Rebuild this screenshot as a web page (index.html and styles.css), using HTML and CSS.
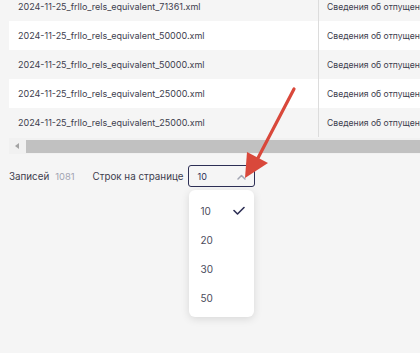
FILE: index.html
```html
<!DOCTYPE html>
<html lang="ru">
<head>
  <meta charset="UTF-8" />
  <meta name="viewport" content="width=device-width, initial-scale=1.0" />
  <title>Файлы</title>
  <link rel="stylesheet" href="styles.css">
</head>
<body>
  <!-- Таблица файлов -->
  <div class="table">
    <div class="row">
      <div class="cell name">2024-11-25_frllo_rels_equivalent_71361.xml</div>
      <div class="cell type">Сведения об отпущенных лекарственных препаратах</div>
    </div>
    <div class="row">
      <div class="cell name">2024-11-25_frllo_rels_equivalent_50000.xml</div>
      <div class="cell type">Сведения об отпущенных лекарственных препаратах</div>
    </div>
    <div class="row">
      <div class="cell name">2024-11-25_frllo_rels_equivalent_50000.xml</div>
      <div class="cell type">Сведения об отпущенных лекарственных препаратах</div>
    </div>
    <div class="row">
      <div class="cell name">2024-11-25_frllo_rels_equivalent_25000.xml</div>
      <div class="cell type">Сведения об отпущенных лекарственных препаратах</div>
    </div>
    <div class="row">
      <div class="cell name">2024-11-25_frllo_rels_equivalent_25000.xml</div>
      <div class="cell type">Сведения об отпущенных лекарственных препаратах</div>
    </div>
  </div>

  <div class="scrollbar">
    <div class="scroll-btn"></div>
    <div class="scroll-thumb"></div>
  </div>

  <!-- Пагинация -->
  <div class="footer">
    <span class="label">Записей</span>
    <span class="count">1081</span>
    <span class="label rows-label">Строк на странице</span>
    <div class="select">
      <div class="select-box">
        <span>10</span>
        <svg class="chevron" width="9" height="6" viewBox="0 0 9 6">
          <path d="M1 5 L4.5 1.5 L8 5" fill="none" stroke="#a3a6b4" stroke-width="1.5" stroke-linecap="round" stroke-linejoin="round"/>
        </svg>
      </div>
      <ul class="dropdown">
        <li class="selected">10
          <svg class="check" width="12" height="9" viewBox="0 0 12 9">
            <path d="M1 4.5 L4.5 8 L11 1.5" fill="none" stroke="#2d2f55" stroke-width="1.6" stroke-linecap="round" stroke-linejoin="round"/>
          </svg>
        </li>
        <li>20</li>
        <li>30</li>
        <li>50</li>
      </ul>
    </div>
  </div>

  <svg class="pointer" width="420" height="353" viewBox="0 0 420 353">
    <line x1="294" y1="89" x2="258" y2="158" stroke="#d9483b" stroke-width="3.2" stroke-linecap="round"/>
    <polygon points="245,178 247,152 268,163" fill="#d9483b"/>
  </svg>
</body>
</html>
```

FILE: styles.css
```css
html, body {
  overflow: hidden;
}

body {
  margin: 0;
  padding: 0 0 0 9px;
  background-color: #f5f5f5;
  font-family: "Inter", "Noto Sans", sans-serif;
  color: #3d3d4d;
  height: 353px;
}

.table {
  margin-top: -8px;
  width: 640px;
}

.row {
  display: grid;
  grid-template-columns: 309px 1fr;
  height: 29px;
  background-color: #f5f5f5;
}

.row:nth-child(even) {
  background-color: #fff;
}

.cell {
  display: flex;
  align-items: center;
  font-size: 9px;
  white-space: nowrap;
  overflow: hidden;
}

.name {
  padding-left: 9px;
}

.type {
  border-left: 1px solid #dcdcdc;
  padding-left: 8px;
  font-size: 8.6px;
}

.scrollbar {
  display: flex;
  align-items: center;
  height: 16px;
  width: 640px;
  background-color: #f1f1f1;
  margin-top: 1px;
}

.scroll-btn {
  width: 17px;
  height: 16px;
  position: relative;
}

.scroll-btn::before {
  content: "";
  position: absolute;
  left: 6px;
  top: 5px;
  border-top: 3px solid transparent;
  border-bottom: 3px solid transparent;
  border-right: 4px solid #a3a3a3;
}

.scroll-thumb {
  flex: 1;
  height: 13px;
  background-color: #c1c1c1;
}

.footer {
  display: flex;
  align-items: center;
  margin-top: 11px;
  font-size: 9.8px;
}

.label {
  color: #3d3d4d;
}

.count {
  color: #a2a4b2;
  margin-left: 6px;
  font-size: 9.4px;
}

.rows-label {
  margin-left: 18px;
}

.select {
  position: relative;
  margin-left: 5px;
}

.select-box {
  display: flex;
  align-items: center;
  justify-content: space-between;
  box-sizing: border-box;
  width: 67px;
  height: 22px;
  padding: 0 8px 0 8px;
  border: 1.5px solid #2d2f55;
  border-radius: 3px;
  font-size: 9px;
  color: #2d2f55;
}

.chevron {
  margin-top: 1px;
}

.dropdown {
  position: absolute;
  top: 25px;
  left: 1px;
  width: 65px;
  margin: 0;
  padding: 6px 0 5px;
  list-style: none;
  background-color: #fff;
  border-radius: 6px;
  box-shadow: 0 2px 8px rgba(0,0,0,0.12);
}

.dropdown li {
  display: flex;
  align-items: center;
  justify-content: space-between;
  height: 29px;
  padding: 0 9px 0 11px;
  font-size: 10px;
  color: #4a4b5c;
}

.pointer {
  position: absolute;
  top: 0;
  left: 0;
  pointer-events: none;
}
```
